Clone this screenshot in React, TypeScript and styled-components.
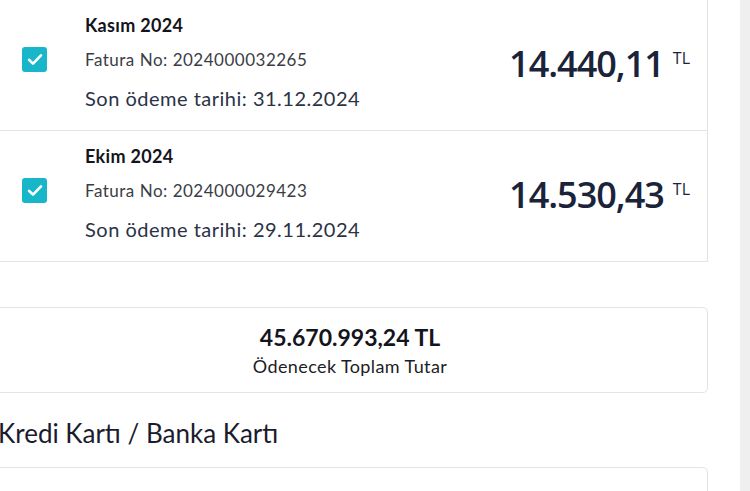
import React from 'react';
import styled, { createGlobalStyle } from 'styled-components';

const GlobalStyle = createGlobalStyle`
  html, body {
    margin: 0;
    padding: 0;
    background: #ffffff;
    overflow: hidden;
  }
  body {
    font-family: Lato, "Noto Sans", sans-serif;
  }
`;

const Page = styled.div`
  display: flex;
  width: 750px;
  height: 491px;
  overflow: hidden;
`;

const Main = styled.div`
  width: 716px;
  margin-left: -8px;
  padding-right: 32px;
  display: flex;
  flex-direction: column;
  & > * {
    flex-shrink: 0;
  }
`;

const SideStrip = styled.div`
  width: 10px;
  background: #efefef;
`;

const InvoiceList = styled.div`
  border: 1px solid #e2e2e8;
  border-top: none;
  background: #fff;
`;

const InvoiceRow = styled.div`
  display: flex;
  align-items: flex-start;
  padding: 15px 17px 20px 29px;
  & + & {
    border-top: 1px solid #e2e2e8;
  }
`;

const CheckBox = styled.div`
  width: 25px;
  height: 25px;
  margin-top: 32px;
  margin-right: 38px;
  border-radius: 3px;
  background: #17b6c9;
  display: flex;
  align-items: center;
  justify-content: center;
  flex-shrink: 0;
`;

const Info = styled.div`
  display: flex;
  flex-direction: column;
  flex: 1;
`;

const Period = styled.div`
  font-size: 18px;
  line-height: 20px;
  font-weight: 700;
  letter-spacing: 0.3px;
  color: #14141c;
`;

const InvoiceNo = styled.div`
  margin-top: 15px;
  font-size: 17px;
  line-height: 20px;
  letter-spacing: 0.5px;
  color: #3b3d45;
`;

const DueDate = styled.div`
  margin-top: 16px;
  font-size: 20px;
  line-height: 24px;
  letter-spacing: 0.5px;
  color: #2b3246;
`;

const Amount = styled.div`
  display: flex;
  align-items: flex-start;
  margin-top: 31px;
  color: #1a2339;
  font-family: "Open Sans", "Noto Sans", sans-serif;
`;

const AmountValue = styled.span`
  font-size: 36px;
  line-height: 36px;
  font-weight: 600;
  letter-spacing: -1px;
`;

const Currency = styled.span`
  margin-left: 9px;
  margin-top: 3px;
  font-size: 16px;
  line-height: 18px;
  font-weight: 500;
`;

const TotalCard = styled.div`
  margin-top: 45px;
  height: 86px;
  border: 1px solid #e3e3ec;
  border-radius: 5px;
  display: flex;
  flex-direction: column;
  align-items: center;
  justify-content: center;
  box-sizing: border-box;
  padding-top: 1px;
`;

const TotalValue = styled.div`
  font-size: 23px;
  line-height: 26px;
  font-weight: 700;
  color: #14141c;
`;

const TotalLabel = styled.div`
  margin-top: 5px;
  font-size: 18px;
  line-height: 22px;
  letter-spacing: 0.4px;
  color: #1c1d26;
`;

const SectionTitle = styled.h2`
  margin: 23px 0 0 6px;
  font-size: 26px;
  line-height: 34px;
  font-weight: 400;
  color: #1a1c2c;
`;

const MethodCard = styled.div`
  margin-top: 17px;
  height: 60px;
  border: 1px solid #e3e3ec;
  border-radius: 5px;
`;

const Check = () => (
  <svg width="16" height="13" viewBox="0 0 16 13" fill="none">
    <path d="M2 6.8L6 10.6L14 2.4" stroke="#fff" strokeWidth="2.6" strokeLinecap="round" strokeLinejoin="round" />
  </svg>
);

const invoices = [
  { period: 'Kasım 2024', no: '2024000032265', due: '31.12.2024', amount: '14.440,11' },
  { period: 'Ekim 2024', no: '2024000029423', due: '29.11.2024', amount: '14.530,43' },
];

const App = () => {
  return (
    <Page>
      <GlobalStyle />
      <Main>
        <InvoiceList>
          {invoices.map((inv) => (
            <InvoiceRow key={inv.no}>
              <CheckBox>
                <Check />
              </CheckBox>
              <Info>
                <Period>{inv.period}</Period>
                <InvoiceNo>Fatura No: {inv.no}</InvoiceNo>
                <DueDate>Son ödeme tarihi: {inv.due}</DueDate>
              </Info>
              <Amount>
                <AmountValue>{inv.amount}</AmountValue>
                <Currency>TL</Currency>
              </Amount>
            </InvoiceRow>
          ))}
        </InvoiceList>
        <TotalCard>
          <TotalValue>45.670.993,24 TL</TotalValue>
          <TotalLabel>Ödenecek Toplam Tutar</TotalLabel>
        </TotalCard>
        <SectionTitle>Kredi Kartı / Banka Kartı</SectionTitle>
        <MethodCard />
      </Main>
      <SideStrip />
    </Page>
  );
};

export default App;
